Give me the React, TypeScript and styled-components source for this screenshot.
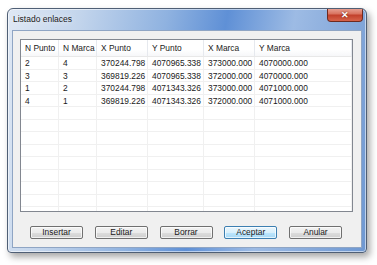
import styled, { createGlobalStyle } from "styled-components";

const GlobalStyle = createGlobalStyle`
  html, body {
    margin: 0;
    padding: 0;
    background: #ffffff;
  }
  body {
    font-family: "Liberation Sans", Arial, sans-serif;
    -webkit-font-smoothing: antialiased;
  }
`;

const Page = styled.div`
  width: 377px;
  height: 265px;
  padding: 8px 0 0 7px;
  box-sizing: border-box;
`;

const Window = styled.div`
  width: 360px;
  height: 245px;
  box-sizing: border-box;
  border: 1px solid #4f5f75;
  border-radius: 6px 6px 4px 4px;
  background: linear-gradient(
    100deg,
    #dfe8f4 0%,
    #c3d5ec 18%,
    #8fb2e0 40%,
    #5f90d6 55%,
    #9dbbe4 72%,
    #7fa4d8 90%,
    #6e98d2 100%
  );
  box-shadow: 3px 4px 7px rgba(0, 0, 0, 0.35), inset 0 0 0 1px rgba(255, 255, 255, 0.55);
  display: flex;
  flex-direction: column;
  overflow: hidden;
`;

const TitleBar = styled.div`
  height: 21px;
  display: flex;
  align-items: flex-start;
  padding: 0 3px 0 5px;
  flex-shrink: 0;
`;

const Title = styled.div`
  line-height: 20px;
  font-size: 8.5px;
  color: #1b1b1b;
  text-shadow: 0 0 6px rgba(255, 255, 255, 0.9);
`;

const CloseButton = styled.div`
  margin-left: auto;
  margin-top: -1px;
  width: 36px;
  height: 14px;
  box-sizing: border-box;
  border: 1px solid #6e2a20;
  border-top: none;
  border-radius: 0 0 4px 4px;
  background: linear-gradient(180deg, #e9a79a 0%, #d9735f 45%, #c2402b 55%, #d6634a 100%);
  display: flex;
  align-items: center;
  justify-content: center;
  color: #ffffff;
  font-size: 9px;
  font-weight: bold;
  text-shadow: 0 0 2px #5a1a10;
`;

const Client = styled.div`
  flex: 1;
  margin: 0 4px 4px 4px;
  border: 1px solid #8fa5c4;
  background: #f0f0f0;
  padding: 8px 8px 8px 7px;
  display: flex;
  flex-direction: column;
`;

const ListView = styled.div`
  height: 173px;
  box-sizing: border-box;
  border: 1px solid #828790;
  background: #ffffff;
  overflow: hidden;
`;

const HeaderRow = styled.div`
  display: grid;
  grid-template-columns: 38px 38px 51px 56px 51px 1fr;
  height: 17px;
  border-bottom: 1px solid #e8e8e8;
  box-sizing: border-box;
  background: linear-gradient(180deg, #ffffff 0%, #ffffff 60%, #f6f7f9 100%);
`;

const Row = styled.div`
  display: grid;
  grid-template-columns: 38px 38px 51px 56px 51px 1fr;
  height: 13px;
  border-bottom: 1px solid #f0f0f0;
  box-sizing: border-box;
  background: #ffffff;

  &:nth-child(odd) {
    height: 12px;
  }
`;

const Cell = styled.div<{ $header?: boolean }>`
  border-right: 1px solid ${(p) => (p.$header ? "#e6e9ee" : "#f0f0f0")};
  padding-left: 4px;
  font-size: 8.4px;
  line-height: ${(p) => (p.$header ? "17px" : "12px")};
  color: #1a1a1a;
  white-space: nowrap;
  overflow: hidden;
`;

const ButtonRow = styled.div`
  margin-top: 14px;
  padding: 0 11px 0 10px;
  display: flex;
  justify-content: space-between;
`;

const Button = styled.div<{ $default?: boolean }>`
  width: 53px;
  height: 13px;
  box-sizing: border-box;
  border: 1px solid ${(p) => (p.$default ? "#3c7fb1" : "#707070")};
  border-radius: 2px;
  background: ${(p) =>
    p.$default
      ? "linear-gradient(180deg, #eaf6fd 0%, #d9f0fc 50%, #bee6fd 51%, #a7d9f5 100%)"
      : "linear-gradient(180deg, #f2f2f2 0%, #ebebeb 50%, #dddddd 51%, #cfcfcf 100%)"};
  box-shadow: inset 0 0 0 1px rgba(255, 255, 255, 0.7);
  font-size: 8.4px;
  line-height: 11px;
  text-align: center;
  color: #1a1a1a;
`;

const headers = ["N Punto", "N Marca", "X Punto", "Y Punto", "X Marca", "Y Marca"];

const data = [
  ["2", "4", "370244.798", "4070965.338", "373000.000", "4070000.000"],
  ["3", "3", "369819.226", "4070965.338", "372000.000", "4070000.000"],
  ["1", "2", "370244.798", "4071343.326", "373000.000", "4071000.000"],
  ["4", "1", "369819.226", "4071343.326", "372000.000", "4071000.000"],
];

const EMPTY_ROWS = 9;

const App = () => {
  const rows = [...data, ...Array.from({ length: EMPTY_ROWS }, () => ["", "", "", "", "", ""])];

  return (
    <Page>
      <GlobalStyle />
      <Window>
        <TitleBar>
          <Title>Listado enlaces</Title>
          <CloseButton>✕</CloseButton>
        </TitleBar>
        <Client>
          <ListView>
            <HeaderRow>
              {headers.map((h) => (
                <Cell $header key={h}>
                  {h}
                </Cell>
              ))}
            </HeaderRow>
            {rows.map((r, idx) => (
              <Row key={"row" + idx}>
                {r.map((c, ci) => (
                  <Cell key={ci}>{c}</Cell>
                ))}
              </Row>
            ))}
          </ListView>
          <ButtonRow>
            <Button>Insertar</Button>
            <Button>Editar</Button>
            <Button>Borrar</Button>
            <Button $default>Aceptar</Button>
            <Button>Anular</Button>
          </ButtonRow>
        </Client>
      </Window>
    </Page>
  );
};

export default App;
